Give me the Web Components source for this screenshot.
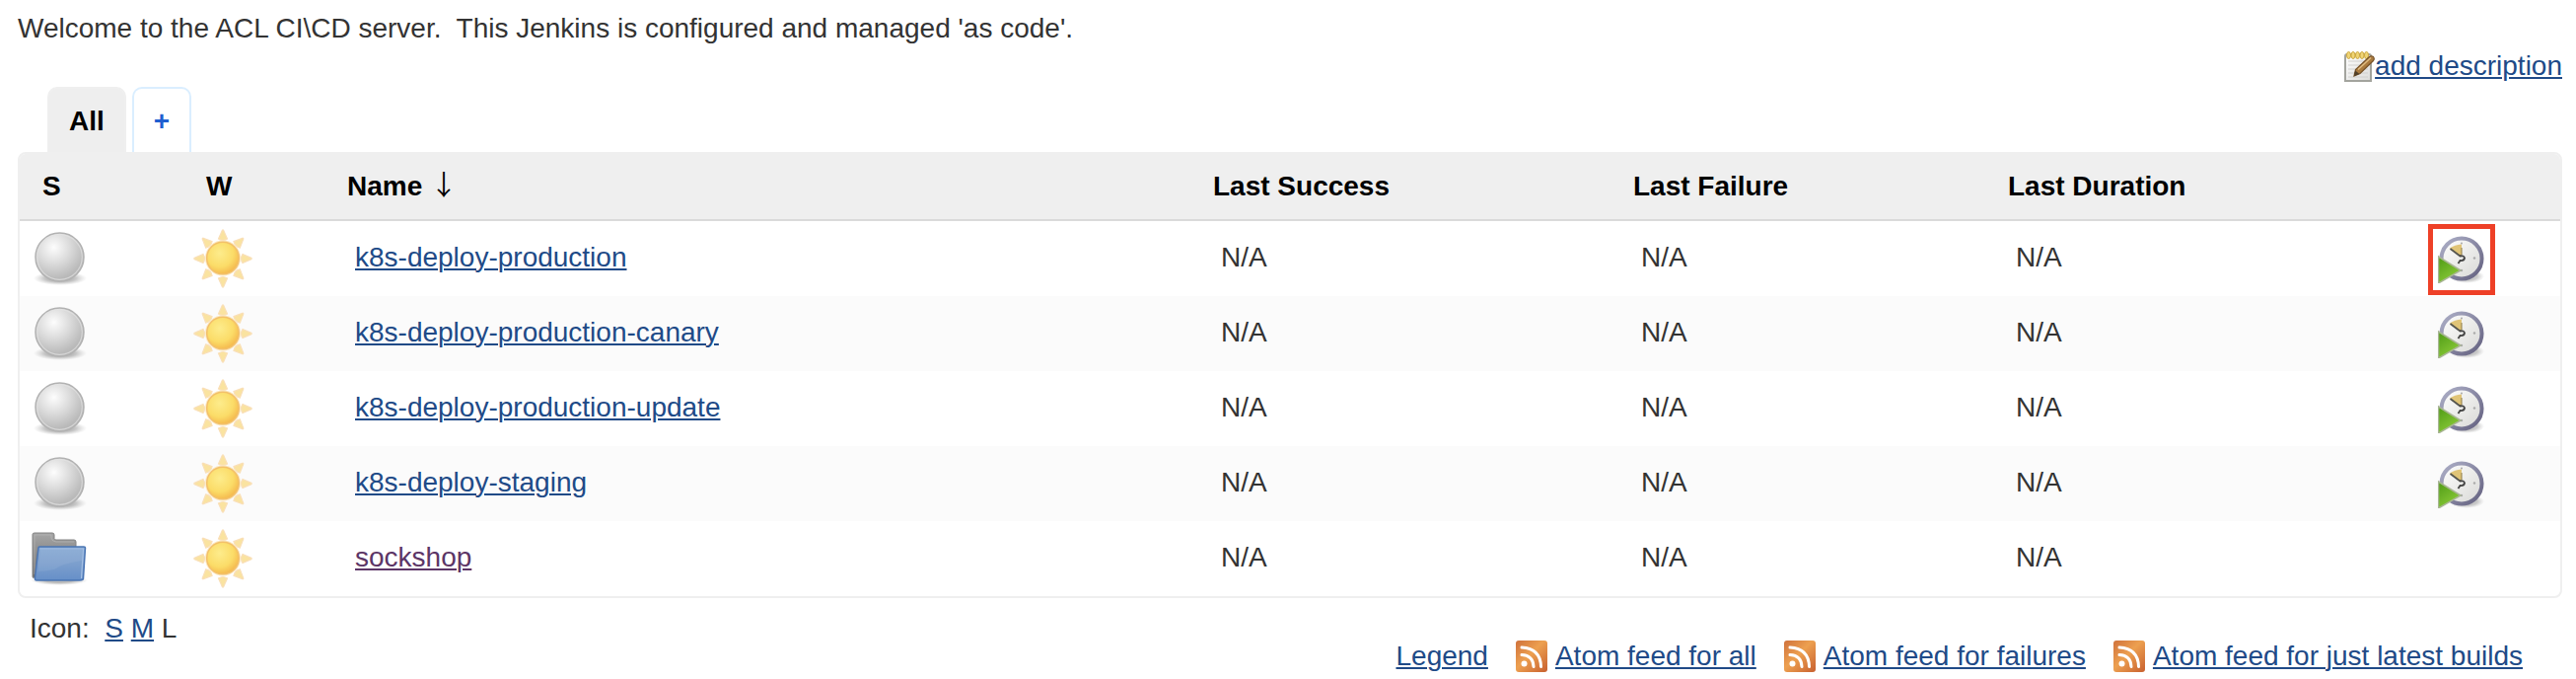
<!DOCTYPE html>
<html lang="en">
<head>
<meta charset="utf-8">
<title>Dashboard [Jenkins]</title>
<style>
  body { margin: 0; background: #fff; color: #333; font: 28px/38px "Liberation Sans", Arial, Helvetica, sans-serif; }
</style>
</head>
<body>
<ci-dashboard>
  <span slot="message">Welcome to the ACL CI\CD server.&nbsp; This Jenkins is configured and managed 'as code'.</span>
</ci-dashboard>

<script>
const ICONS = {
  ball: `<svg viewBox="0 0 64 64" width="64" height="64">
    <defs>
      <radialGradient id="b" cx=".38" cy=".3" r=".65"><stop offset="0" stop-color="#fdfdfd"/><stop offset=".5" stop-color="#dcdcdc"/><stop offset="1" stop-color="#b9b9b9"/></radialGradient>
      <radialGradient id="s"><stop offset="0" stop-color="#555" stop-opacity=".75"/><stop offset=".6" stop-color="#777" stop-opacity=".4"/><stop offset="1" stop-color="#999" stop-opacity="0"/></radialGradient>
    </defs>
    <ellipse cx="33" cy="52" rx="27" ry="7" fill="url(#s)"/>
    <circle cx="32.500" cy="30.500" r="24.500" fill="url(#b)" stroke="#b2b2b2" stroke-width="1.500"/>
    <circle cx="32.500" cy="30.500" r="22.800" fill="none" stroke="#e2e2e2" stroke-width="1.200" opacity=".7"/>
  </svg>`,
  sun: `<svg viewBox="0 0 64 64" width="64" height="64">
    <defs><radialGradient id="u" cx=".4" cy=".35" r=".65"><stop offset="0" stop-color="#fdec8c"/><stop offset=".65" stop-color="#fbdc68"/><stop offset="1" stop-color="#f5bb4f"/></radialGradient></defs>
    <g fill="#fae3a0" stroke="#f9dfb8" stroke-width="1.200">
      ${[0, 45, 90, 135, 180, 225, 270, 315].map(a => `<path d="M27.500 12 31.500 3h1l4 9Q32 15 27.500 12Z" transform="rotate(${a} 32 32)"/>`).join('')}
    </g>
    <circle cx="32" cy="31.500" r="18" fill="#fbe9c4"/>
    <circle cx="32" cy="31.500" r="16.300" fill="url(#u)" stroke="#f3c06a" stroke-width="1.500"/>
  </svg>`,
  folder: `<svg viewBox="0 0 64 64" width="64" height="64">
    <defs>
      <linearGradient id="g" x2="0" y2="1"><stop offset="0" stop-color="#a5a5a5"/><stop offset="1" stop-color="#6c6c6c"/></linearGradient>
      <linearGradient id="f" x2="0" y2="1"><stop offset="0" stop-color="#88a9d3"/><stop offset=".5" stop-color="#7c9fcd"/><stop offset="1" stop-color="#668fc8"/></linearGradient>
      <radialGradient id="h"><stop offset=".5" stop-color="#777" stop-opacity=".5"/><stop offset="1" stop-color="#999" stop-opacity="0"/></radialGradient>
    </defs>
    <ellipse cx="32" cy="54" rx="29" ry="5" fill="url(#h)"/>
    <path d="M5 7.500Q5 6 7 6H25Q27 6 27 8V11.500Q27 13 29 13H47Q49 13 49 15V50H8Q5 53 5 50Z" fill="url(#g)" stroke="#828282"/>
    <path d="M7 48V8H24V11Q25 15 29 15H47" fill="none" stroke="#bbb" opacity=".6"/>
    <path d="M11 21Q11 20 12 20H57Q58.500 20 58.500 21L56.500 52Q56.500 54 53 54H9Q7 54 7.500 51Z" fill="url(#f)" stroke="#4a75b4" stroke-width="1.500"/>
    <path d="M12.500 22H56.500L54.500 52" fill="none" stroke="#a4c0e5" stroke-width="1.200"/>
    <path d="M13 23H55.500L55 34Q35 37 27 43 18 45 10.500 45Z" fill="#fff" opacity=".07"/>
  </svg>`,
  clock: `<svg viewBox="0 0 48 48" width="48" height="48">
    <defs>
      <linearGradient id="c" x2="1" y2="1"><stop offset="0" stop-color="#aeb0c8"/><stop offset="1" stop-color="#63607f"/></linearGradient>
      <linearGradient id="k" x2="1" y2="1"><stop offset="0" stop-color="#fff"/><stop offset="1" stop-color="#d8d8d5"/></linearGradient>
      <linearGradient id="p" x2=".6" y2="1"><stop offset="0" stop-color="#4e9a16"/><stop offset="1" stop-color="#8ccc38"/></linearGradient>
      <radialGradient id="q"><stop offset=".6" stop-color="#777" stop-opacity=".4"/><stop offset="1" stop-color="#999" stop-opacity="0"/></radialGradient>
    </defs>
    <ellipse cx="29" cy="41" rx="18" ry="7" fill="url(#q)"/>
    <circle cx="24" cy="23" r="20.500" fill="url(#k)" stroke="url(#c)" stroke-width="4"/>
    <path d="M24 21 12 12.500Q17 9 24 8.500Z" fill="#e0c477"/>
    <g fill="#aaa"><circle cx="24" cy="7.500" r="1"/><circle cx="37" cy="22.500" r="1.200"/><circle cx="24" cy="35" r="1.200"/></g>
    <path d="M12.500 13 22.500 20.500" fill="none" stroke="#55554e" stroke-width="1.800"/>
    <path d="M24 12V19" stroke="#8d7a45" stroke-width="1"/>
    <path d="M22 20.500Q26.500 19.500 27 22.500 26.500 25.500 22.500 25L20.500 28" fill="none" stroke="#444" stroke-width="1.800"/>
    <path d="M.500 21 23 35 .500 48Z" fill="url(#p)" stroke="#a9b695" stroke-width="1.500"/>
  </svg>`,
  notepad: `<svg viewBox="0 0 32 32" width="32" height="32">
    <defs><linearGradient id="n" x2="1" y2="1"><stop offset="0" stop-color="#fff"/><stop offset="1" stop-color="#dcdcda"/></linearGradient></defs>
    <path d="M2 6Q2 4 4 4H26Q28 4 28 6V31H2Z" fill="url(#n)" stroke="#a3a49e" stroke-width="2"/>
    <path d="M5 11H25M5 15H25M5 19H25M5 23H25M5 27H25" stroke="#d0d0ce"/>
    <g fill="#f0d576" stroke="#cda83f"><ellipse cx="5.500" cy="5" rx="2" ry="3.500"/><ellipse cx="10" cy="5" rx="2" ry="3.500"/><ellipse cx="14.500" cy="5" rx="2" ry="3.500"/><ellipse cx="19" cy="5" rx="2" ry="3.500"/><ellipse cx="23.500" cy="5" rx="2" ry="3.500"/></g>
    <path d="M11 26 12.500 19.500 26.500 6.500Q28.500 5 30.500 6.500 32 8.500 30.500 10.500L17 23.500Z" fill="#a97a3e" stroke="#76532a" stroke-width="1.200"/>
    <path d="M15 19.500 28 7.500" stroke="#e0bd83" stroke-width="1.500"/>
    <path d="M11 26 12.200 20.500 16.500 24Z" fill="#50402a"/>
  </svg>`,
  feed: `<svg viewBox="0 0 32 32" width="32" height="32">
    <defs><linearGradient id="o" x2="1" y2="1"><stop offset="0" stop-color="#cf713b"/><stop offset=".45" stop-color="#eda050"/><stop offset="1" stop-color="#c8602f"/></linearGradient></defs>
    <rect width="32" height="32" rx="3" fill="url(#o)"/>
    <circle cx="8.500" cy="23.500" r="3" fill="#fff"/>
    <path d="M6 14.500Q17.500 15 18 26.500M6 7Q25 8 25.500 26.500" fill="none" stroke="#fff" stroke-width="3" stroke-linecap="round"/>
  </svg>`
};

const LINK_STYLE = `
  a { color: #204a87; text-decoration: underline; text-decoration-thickness: 2px; text-underline-offset: 2px; }
`;

function define(name, render) {
  customElements.define(name, class extends HTMLElement {
    constructor() {
      super();
      this.attachShadow({ mode: 'open' });
    }
    connectedCallback() {
      const template = document.createElement('template');
      template.innerHTML = render(this);
      this.shadowRoot.replaceChildren(template.content.cloneNode(true));
    }
  });
}

define('ci-icon', el => `
  <style>:host { display: inline-flex; flex: none; } svg { display: block; }</style>
  ${ICONS[el.getAttribute('name')]}
`);

define('icon-link', el => `
  <style>
    :host { display: inline-flex; align-items: center; gap: var(--icon-gap, 8px); white-space: nowrap; }
    ${LINK_STYLE}
  </style>
  <ci-icon name="${el.getAttribute('icon')}"></ci-icon><a href="${el.getAttribute('href')}"><slot></slot></a>
`);

define('view-tabs', () => `
  <style>
    :host { display: block; }
    nav { display: flex; gap: 6px; padding: 0 30px; }
    a { box-sizing: border-box; height: 66px; padding: 14px 20px 0; border: 2px solid #daeeff; border-bottom: 0;
        border-radius: 10px 10px 0 0; font-weight: bold; text-decoration: none; color: #1f5fd0; }
    a[aria-current] { background: #eee; border-color: #efefef; color: #000; }
  </style>
  <nav aria-label="Views"><a href="#all" aria-current="page">All</a><a href="#new" aria-label="New view">+</a></nav>
`);

const JOBS = [
  { name: 'k8s-deploy-production', icon: 'ball', build: true, marked: true },
  { name: 'k8s-deploy-production-canary', icon: 'ball', build: true },
  { name: 'k8s-deploy-production-update', icon: 'ball', build: true },
  { name: 'k8s-deploy-staging', icon: 'ball', build: true },
  { name: 'sockshop', icon: 'folder', visited: true }
];

define('build-button', el => `
  <style>
    :host { display: block; }
    button { display: flex; align-items: center; justify-content: center; box-sizing: border-box; width: 68px; height: 72px;
             padding: 0; border: 5px solid transparent; background: none; }
    :host([marked]) button { border-color: #ee4027; }
  </style>
  <button type="button" aria-label="Schedule a build"><ci-icon name="clock"></ci-icon></button>
`);

define('job-table', () => `
  <style>
    :host { display: block; border: 2px solid #efefef; border-radius: 8px; overflow: hidden; }
    table { width: 100%; table-layout: fixed; border-collapse: separate; border-spacing: 0; }
    .symbol { width: 166px; } .success, .duration { width: 426px; } .failure { width: 380px; } .action { width: 134px; }
    th { box-sizing: border-box; height: 68px; padding: 0; background: #efefef; border-bottom: 2px solid #dadada; color: #000; text-align: left; }
    th.symbol { padding-left: 23px; }
    th span { font-family: "Noto Sans CJK JP", sans-serif; font-weight: normal; line-height: 28px; }
    td { box-sizing: border-box; height: 76px; padding: 0 0 2px 8px; }
    td.art { padding: 0 0 0 8px; }
    td.run { padding: 2px 0 0; }
    td ci-icon { vertical-align: middle; }
    tbody tr:nth-child(even) { background: #fbfbfb; }
    ${LINK_STYLE}
    a.visited { color: #5c3566; }
  </style>
  <table>
    <thead><tr>
      <th class="symbol">S</th><th class="symbol">W</th><th>Name <span>↓</span></th>
      <th class="success">Last Success</th><th class="failure">Last Failure</th><th class="duration">Last Duration</th><th class="action"></th>
    </tr></thead>
    <tbody>${JOBS.map(job => `
      <tr>
        <td class="art"><ci-icon name="${job.icon}"></ci-icon></td>
        <td class="art"><ci-icon name="sun"></ci-icon></td>
        <td><a href="#${job.name}"${job.visited ? ' class="visited"' : ''}>${job.name}</a></td>
        <td>N/A</td><td>N/A</td><td>N/A</td>
        <td class="run">${job.build ? `<build-button${job.marked ? ' marked' : ''}></build-button>` : ''}</td>
      </tr>`).join('')}
    </tbody>
  </table>
`);

define('table-footer', () => `
  <style>
    :host { display: flex; justify-content: space-between; align-items: flex-start; padding: 12px 40px 0 12px; }
    .sizes { white-space: pre; }
    .feeds { display: flex; gap: 28px; margin-top: 28px; white-space: nowrap; }
    ${LINK_STYLE}
  </style>
  <div class="sizes">Icon:  <a href="#small">S</a> <a href="#medium">M</a> L</div>
  <div class="feeds">
    <a href="#legend">Legend</a>
    <icon-link icon="feed" href="#rss-all">Atom feed for all</icon-link>
    <icon-link icon="feed" href="#rss-failed">Atom feed for failures</icon-link>
    <icon-link icon="feed" href="#rss-latest">Atom feed for just latest builds</icon-link>
  </div>
`);

define('ci-dashboard', () => `
  <style>
    :host { display: block; padding: 10px 14px 0 18px; }
    .edit { display: flex; justify-content: flex-end; margin-bottom: 2px; --icon-gap: 0px; }
  </style>
  <div><slot name="message"></slot></div>
  <div class="edit"><icon-link icon="notepad" href="#edit">add description</icon-link></div>
  <view-tabs></view-tabs>
  <job-table></job-table>
  <table-footer></table-footer>
`);
</script>
</body>
</html>
